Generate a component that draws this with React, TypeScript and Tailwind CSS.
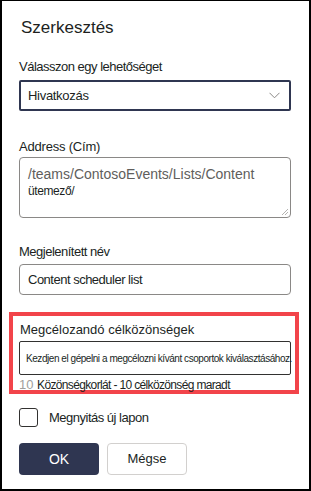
import React from "react";

export default function App() {
  const font = { fontFamily: '"Liberation Sans", Arial, sans-serif' };
  return (
    <div className="w-[311px] h-[491px] bg-white overflow-hidden" style={font}>
      <div className="w-[311px] h-[491px] border-t border-l-2 border-r-2 border-b-2 border-black box-border pl-[17px] pr-[17px] text-[#201f1e]">
        <div className="mt-[16px] h-[22px] text-[17px] leading-[22px] pl-[2px]">Szerkesztés</div>

        <div className="mt-[20px] h-[16px] text-[13px] leading-[16px] tracking-[-0.5px]">Válasszon egy lehetőséget</div>
        <div className="mt-[5px] h-[31px] w-[272px] border-2 border-[#2f3651] rounded-[2px] flex items-center justify-between pl-[7px] pr-[8px]">
          <span className="text-[13px] tracking-[-0.3px]">Hivatkozás</span>
          <svg width="11" height="7" viewBox="0 0 11 7" className="mr-[1px]">
            <polyline points="0.5,0.8 5.5,5.8 10.5,0.8" fill="none" stroke="#8a8886" strokeWidth="1" />
          </svg>
        </div>

        <div className="mt-[28px] h-[16px] text-[13px] leading-[16px] tracking-[-0.2px]">Address (Cím)</div>
        <div className="mt-[2px] h-[61px] w-[272px] border border-[#8a8886] rounded-[4px] relative pl-[8px] pt-[8px]">
          <div className="text-[14px] leading-[17px] text-[#605e5c]">/teams/ContosoEvents/Lists/Content</div>
          <div className="text-[12px] leading-[15px] mt-[1px] tracking-[-0.4px] text-[#201f1e]">ütemező/</div>
          <svg width="6" height="6" viewBox="0 0 6 6" className="absolute right-[2px] bottom-[2px]">
            <line x1="0" y1="6" x2="6" y2="0" stroke="#a19f9d" strokeWidth="0.8" />
            <line x1="3" y1="6" x2="6" y2="3" stroke="#a19f9d" strokeWidth="0.8" />
          </svg>
        </div>

        <div className="mt-[26px] h-[16px] text-[13px] leading-[16px] tracking-[-0.5px]">Megjelenített név</div>
        <div className="mt-[4px] h-[31px] w-[272px] border border-[#8a8886] rounded-[4px] flex items-center pl-[8px]">
          <span className="text-[13px] tracking-[-0.5px]">Content scheduler list</span>
        </div>

        <div className="mt-[17px] -ml-[10px] w-[290px] h-[82px] border-4 border-[#f2444a] pl-[6px] pt-[6px]">
          <div className="h-[16px] text-[13px] leading-[16px] pl-[1px]">Megcélozandó célközönségek</div>
          <div className="mt-[3px] h-[34px] w-[272px] border border-[#323130] rounded-[2px] flex items-center pl-[6px] whitespace-nowrap">
            <span className="text-[10px] tracking-[-0.45px] text-[#201f1e]">Kezdjen el gépelni a megcélozni kívánt csoportok kiválasztásához.</span>
          </div>
          <div className="mt-[1px] h-[16px] leading-[16px] whitespace-nowrap">
            <span className="text-[13px] text-[#a19f9d]">10 </span>
            <span className="text-[12px] tracking-[-0.65px]">Közönségkorlát - 10 célközönség maradt</span>
          </div>
        </div>

        <div className="mt-[14px] flex items-center h-[19px]">
          <div className="w-[19px] h-[19px] border border-[#323130] rounded-[3px]" />
          <span className="ml-[11px] text-[13px] tracking-[-0.5px]">Megnyitás új lapon</span>
        </div>

        <div className="mt-[16px] flex gap-[8px]">
          <button className="w-[80px] h-[32px] rounded-[4px] bg-[#2f3651] text-white text-[14px]">OK</button>
          <button className="w-[80px] h-[32px] rounded-[4px] bg-white border border-[#d2d0ce] text-[13px] text-[#201f1e]">Mégse</button>
        </div>
      </div>
    </div>
  );
}
